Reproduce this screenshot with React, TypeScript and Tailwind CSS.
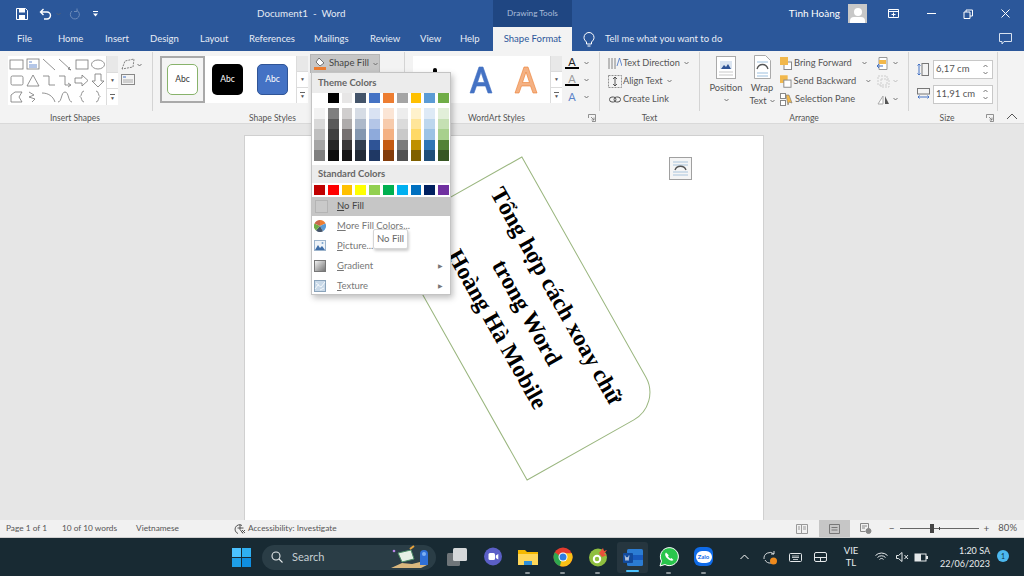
import React from "react"

const tabs = [
  ["File", "w-[46px] pl-[17px]"],
  ["Home", "w-[59px] pl-[12px]"],
  ["Insert", "w-[45px]"],
  ["Design", "w-[50px]"],
  ["Layout", "w-[49px]"],
  ["References", "w-[65px]"],
  ["Mailings", "w-[56px]"],
  ["Review", "w-[50px]"],
  ["View", "w-[40px]"],
  ["Help", "w-[33px]"],
]

const themeTop = ["bg-[#ffffff]", "bg-[#000000]", "bg-[#e7e6e6]", "bg-[#44546a]", "bg-[#4472c4]", "bg-[#ed7d31]", "bg-[#a5a5a5]", "bg-[#ffc000]", "bg-[#5b9bd5]", "bg-[#70ad47]"]
const themeShades = [
  ["bg-[#f2f2f2]", "bg-[#d9d9d9]", "bg-[#bfbfbf]", "bg-[#a6a6a6]", "bg-[#7f7f7f]"],
  ["bg-[#7f7f7f]", "bg-[#595959]", "bg-[#404040]", "bg-[#262626]", "bg-[#0d0d0d]"],
  ["bg-[#d0cece]", "bg-[#aeabab]", "bg-[#757070]", "bg-[#3a3838]", "bg-[#171616]"],
  ["bg-[#d6dce5]", "bg-[#adb9ca]", "bg-[#8497b0]", "bg-[#333f50]", "bg-[#222a35]"],
  ["bg-[#d9e2f3]", "bg-[#b4c6e7]", "bg-[#8eaadb]", "bg-[#2f5496]", "bg-[#1f3864]"],
  ["bg-[#fbe5d5]", "bg-[#f7cbac]", "bg-[#f4b183]", "bg-[#c55a11]", "bg-[#833c0b]"],
  ["bg-[#ededed]", "bg-[#dbdbdb]", "bg-[#c9c9c9]", "bg-[#7b7b7b]", "bg-[#525252]"],
  ["bg-[#fff2cc]", "bg-[#ffe599]", "bg-[#ffd966]", "bg-[#bf9000]", "bg-[#7f6000]"],
  ["bg-[#deeaf6]", "bg-[#bdd7ee]", "bg-[#9cc3e5]", "bg-[#2e75b5]", "bg-[#1f4e79]"],
  ["bg-[#e2efd9]", "bg-[#c5e0b3]", "bg-[#a8d08d]", "bg-[#538135]", "bg-[#375623]"],
]
const standard = ["bg-[#c00000]", "bg-[#ff0000]", "bg-[#ffc000]", "bg-[#ffff00]", "bg-[#92d050]", "bg-[#00b050]", "bg-[#00b0f0]", "bg-[#0070c0]", "bg-[#002060]", "bg-[#7030a0]"]

// the 18 little shapes of the Insert Shapes gallery
const shapeCells = [
  <rect x="1" y="3" width="13" height="9" />,
  <g><rect x="2" y="2" width="12" height="10" /><path d="M4 5h3M4 8h8M4 10h8" stroke="#4472c4" /></g>,
  <path d="M2 2l12 11" />,
  <path d="M2 2l12 11M14 13l-3-1 2-2" />,
  <rect x="2" y="3" width="12" height="9" />,
  <ellipse cx="8" cy="7.500" rx="6.500" ry="4.500" />,
  <rect x="2" y="3" width="12" height="9" rx="1.500" />,
  <path d="M8 2l6 11H2z" />,
  <path d="M2 3h6v9h6" />,
  <path d="M2 3h6v9h5M11 10l3 2-3 2" />,
  <path d="M1 5h7V2l6 5.500-6 5.500V10H1z" />,
  <path d="M5 1h6v7h3l-6 6-6-6h3z" />,
  <path d="M2 13V6l4-3h7l-3 5 3 5z" />,
  <path d="M4 3l5 3-5 2 6 2-3 3" />,
  <path d="M1 4c6 0 11 3 13 9" />,
  <path d="M1 13c4 0 3-10 7-10s3 10 7 10" />,
  <path d="M10 2C7 2 8 7 6 7.500 8 8 7 13 10 13" />,
  <path d="M6 2c3 0 2 5 4 5.500C8 8 9 13 6 13" />,
]

function Down({ className = "" }: { className?: string }) {
  return (
    <svg width="5" height="4" viewBox="0 0 5 4" className={className}>
      <path d="M.5 1l2 2 2-2" fill="none" stroke="#666" strokeWidth=".9" />
    </svg>
  )
}

function ScrollCol({ h = "h-[49px]" }: { h?: string }) {
  return (
    <div className={`w-[12px] ${h} flex flex-col border-l border-[#dcdcdc] bg-white shrink-0`}>
      <div className="flex-1 flex items-center justify-center border-b border-[#dcdcdc] bg-[#e8e8e8]" />
      <div className="flex-1 flex items-center justify-center border-b border-[#dcdcdc] text-[5px] text-[#555]">▼</div>
      <div className="flex-1 flex flex-col items-center justify-center">
        <div className="w-[5px] h-px bg-[#666] mb-px" />
        <div className="text-[5px] leading-[5px] text-[#555]">▼</div>
      </div>
    </div>
  )
}

function GroupLabel({ children, launcher, className = "" }: { children: React.ReactNode; launcher?: boolean; className?: string }) {
  return (
    <div className={`absolute left-0 right-0 top-[59px] h-[14px] flex items-center justify-center text-[8.500px] text-[#555] ${className}`}>
      {children}
      {launcher && (
        <svg width="8" height="8" viewBox="0 0 8 8" className="absolute right-[3px] top-[3px]">
          <path d="M.5 4V.5H7.500V7.500H4M3 3l3 3M6 3.500V6H3.500" fill="none" stroke="#777" strokeWidth=".8" />
        </svg>
      )}
    </div>
  )
}

function AbcTile({ className }: { className: string }) {
  return (
    <div className={`w-[31px] h-[31px] rounded-[5px] flex items-center justify-center text-[8.500px] ${className}`}>Abc</div>
  )
}

function BigA({ className, stroke }: { className: string; stroke: string }) {
  return (
    <svg width="26" height="30" viewBox="0 0 26 30" className={className}>
      <path d="M11 2h4l9 26h-4l-2.500-7H8.500L6 28H2zM13 7l-3.500 10.500h7z" stroke={stroke} strokeWidth=".6" fillRule="evenodd" />
    </svg>
  )
}

function MenuItem({ first, rest, icon, arrow }: { first: string; rest: string; icon: React.ReactNode; arrow?: boolean }) {
  return (
    <div className="h-[20px] flex items-center text-[9.500px] text-[#777]">
      <div className="w-[25px] pl-[2px] flex justify-start shrink-0">{icon}</div>
      <span className="pt-[2px]"><span className="underline">{first}</span>{rest}</span>
      {arrow && <span className="ml-auto mr-[7px] text-[6px] text-[#777]">▶</span>}
    </div>
  )
}

function FillMenu() {
  return (
    <div className="absolute left-[311px] top-[72px] w-[140px] h-[223px] bg-white border border-[#c4c4c4] shadow-[2px_3px_6px_rgba(0,0,0,.25)] z-20">
      <div className="h-[20px] bg-[#ececec] pl-[6px] flex items-center font-bold text-[9.500px] text-[#666]">Theme Colors</div>
      <div className="pl-[2px]">
        <div className="flex gap-[3px]">
          {themeTop.map((c, i) => (
            <div key={i} className={`w-[10.800px] h-[10px] ${c}`} />
          ))}
        </div>
        <div className="flex gap-[3px] mt-[5px]">
          {themeShades.map((col, i) => (
            <div key={i} className="w-[10.800px] flex flex-col">
              {col.map((c, j) => (
                <div key={j} className={`h-[10.500px] ${c}`} />
              ))}
            </div>
          ))}
        </div>
      </div>
      <div className="h-[18px] mt-[4px] pt-[1px] bg-[#ececec] pl-[6px] flex items-center font-bold text-[9.500px] text-[#666]">Standard Colors</div>
      <div className="pl-[2px] mt-[2px] flex gap-[3px]">
        {standard.map((c, i) => (
          <div key={i} className={`w-[10.800px] h-[10px] ${c}`} />
        ))}
      </div>
      <div className="h-[19px] mt-[2px] bg-[#c6c6c6] flex items-center text-[9.500px] text-[#444]">
        <div className="w-[13px] h-[13px] ml-[3px] mr-[9px] border border-[#b4b4b4] bg-[#c9c9c9]" />
        <span className="pt-[1px]"><span className="underline">N</span>o Fill</span>
      </div>
      <div>
        <MenuItem
          first="M"
          rest="ore Fill Colors..."
          icon={
            <svg width="12" height="12" viewBox="0 0 12 12">
              <path d="M6 6V0a6 6 0 0 1 5.500 3.500z" fill="#ed7d31" />
              <path d="M6 6l5.500-2.500A6 6 0 0 1 9 11.200z" fill="#5b9bd5" />
              <path d="M6 6l3 5.200A6 6 0 0 1 2 10.500z" fill="#44546a" />
              <path d="M6 6l-4 4.500A6 6 0 0 1 .5 3.500z" fill="#70ad47" />
              <path d="M6 6L.5 3.500A6 6 0 0 1 6 0z" fill="#c9684a" />
            </svg>
          }
        />
        <MenuItem
          first="P"
          rest="icture..."
          icon={
            <svg width="12" height="11" viewBox="0 0 12 11">
              <rect x=".5" y=".5" width="11" height="10" fill="#eef3f8" stroke="#9db4cc" />
              <path d="M1 10l3-5 2 3 2-2 3 4z" fill="#3f6ea8" />
              <circle cx="8.500" cy="3" r="1" fill="#7aa4cf" />
            </svg>
          }
        />
        <MenuItem
          first="G"
          rest="radient"
          arrow
          icon={<div className="w-[12px] h-[12px] border border-[#777] bg-gradient-to-br from-[#f2f2f2] to-[#777]" />}
        />
        <MenuItem
          first="T"
          rest="exture"
          arrow
          icon={
            <svg width="12" height="12" viewBox="0 0 12 12">
              <rect x=".5" y=".5" width="11" height="11" fill="#c9d9e8" stroke="#8aa3ba" />
              <path d="M1 9l3-4 3 2 4-5M2 3l3 2M6 10l4-2" fill="none" stroke="#f4f8fb" />
            </svg>
          }
        />
      </div>
      <div className="absolute left-[61px] top-[156px] h-[20px] px-[3px] flex items-center bg-white border border-[#d6d6d6] rounded-[2px] shadow-[1px_2px_3px_rgba(0,0,0,.2)] text-[9.500px] text-[#666]">
        No Fill
      </div>
    </div>
  )
}

function TitleBar() {
  return (
    <div className="h-[27px] flex items-center text-white shrink-0">
      <div className="w-[493px] flex items-center relative">
        <svg width="12" height="12" viewBox="0 0 12 12" className="ml-[16px]">
          <path d="M.5.5h9l2 2v9H.5z" fill="none" stroke="#fff" />
          <rect x="3" y="1" width="6" height="3.500" fill="#fff" />
          <rect x="3" y="7" width="6" height="4" fill="#fff" />
        </svg>
        <svg width="14" height="12" viewBox="0 0 14 12" className="ml-[11px]">
          <path d="M4.500 1L1.500 4l3 3M2 4h6a3.500 3.500 0 0 1 0 7H5" fill="none" stroke="#fff" strokeWidth="1.400" />
        </svg>
        <Down className="ml-[3px] opacity-70" />
        <svg width="12" height="12" viewBox="0 0 12 12" className="ml-[8px] opacity-30">
          <path d="M8 2.500A4.500 4.500 0 1 1 3 3M8 .5v3H5" fill="none" stroke="#fff" />
        </svg>
        <svg width="5" height="6" viewBox="0 0 5 6" className="ml-[12px]">
          <path d="M0 0h5v1H0zM0 2.500h5L2.500 5.500z" fill="#fff" />
        </svg>
        <span className="absolute left-[257px] text-[9.800px] text-[#e4eaf4]">Document1&nbsp; -&nbsp; Word</span>
      </div>
      <div className="w-[79px] h-full bg-[#1f4682] flex items-center justify-center text-[8.200px] text-[#a9bcd9]">Drawing Tools</div>
      <div className="flex-1 flex items-center justify-end">
        <span className="text-[10px] mr-[8px]">Tình Hoàng</span>
        <div className="w-[19px] h-[19px] bg-[#c8c8c8] flex flex-col items-center justify-end overflow-hidden mr-[21px]">
          <div className="w-[8px] h-[8px] rounded-full bg-white mb-[1px]" />
          <div className="w-[15px] h-[6px] rounded-t-[4px] bg-white" />
        </div>
        <svg width="12" height="10" viewBox="0 0 12 10" className="mr-[27px]">
          <path d="M.5.5h10v8H.5zM.5 2.500h10M5.500 3.500v4M3.500 5.500h4" fill="none" stroke="#fff" />
        </svg>
        <div className="w-[9px] h-px bg-white mr-[27px]" />
        <svg width="10" height="10" viewBox="0 0 10 10" className="mr-[28px]">
          <path d="M1 3h6v6.500H1zM3 3V1h6.500v6H7" fill="none" stroke="#fff" />
        </svg>
        <svg width="9" height="9" viewBox="0 0 9 9" className="mr-[14px]">
          <path d="M.5.5l8 8M8.500.5l-8 8" stroke="#fff" />
        </svg>
      </div>
    </div>
  )
}

function TabBar() {
  return (
    <div className="h-[24px] flex items-center text-[9.500px] text-[#e8edf6] shrink-0">
      {tabs.map(([t, w]) => (
        <div key={t} className={`${w} pt-[1px]`}>{t}</div>
      ))}
      <div className="w-[79px] h-full pt-[1px] bg-[#f3f3f3] text-[#2b579a] flex items-center justify-center">Shape Format</div>
      <svg width="12" height="15" viewBox="0 0 12 15" className="ml-[11px]">
        <path d="M3.500 10C2 8.500 1 7.500 1 5.500a5 5 0 0 1 10 0c0 2-1 3-2.500 4.500v2h-5zM4.500 14h3" fill="none" stroke="#fff" />
      </svg>
      <span className="ml-[10px] pt-[1px]">Tell me what you want to do</span>
      <svg width="13" height="12" viewBox="0 0 13 12" className="ml-auto mr-[12px]">
        <path d="M.5.5h12v8H5L3 11V8.500H.5z" fill="none" stroke="#d8e2f0" />
      </svg>
    </div>
  )
}

function InsertShapes() {
  return (
    <div className="relative w-[153px] h-full border-r border-[#d4d4d4] shrink-0 pt-[4px] pl-[8px] flex">
      <div className="w-[110px] h-[49px] bg-white flex">
        <div className="w-[98px] grid grid-cols-6 pt-[1px] pl-[1px]">
          {shapeCells.map((s, i) => (
            <svg key={i} width="16" height="16" viewBox="0 0 16 16" fill="none" stroke="#777" strokeWidth=".8">
              {s}
            </svg>
          ))}
        </div>
        <ScrollCol />
      </div>
      <div className="ml-[3px] flex flex-col gap-[3px] pt-[2px]">
        <div className="flex items-center gap-[1px]">
          <svg width="15" height="13" viewBox="0 0 15 13" fill="none" stroke="#666" strokeWidth=".8" strokeDasharray="2 1">
            <path d="M1 11L4 3l9-2-1 8z" />
          </svg>
          <Down />
        </div>
        <svg width="14" height="12" viewBox="0 0 14 12" fill="none">
          <rect x=".5" y=".5" width="13" height="10" stroke="#888" />
          <path d="M2 3h3" stroke="#4472c4" />
          <path d="M2 6h10M2 8h10" stroke="#aaa" />
        </svg>
      </div>
      <GroupLabel className="pr-[2px]">Insert Shapes</GroupLabel>
    </div>
  )
}

function ShapeStyles() {
  return (
    <div className="relative w-[252px] h-full border-r border-[#d4d4d4] shrink-0 pt-[4px] pl-[7px] flex">
      <div className="w-[148px] h-[47px] bg-white flex">
        <div className="w-[136px] flex items-center">
          <div className="w-[45px] h-[47px] border-[2px] border-[#a9a9a9] bg-[#f4f4f4] flex items-center justify-center shrink-0">
            <AbcTile className="bg-white border-[1.500px] border-[#88b36b] text-[#333]" />
          </div>
          <AbcTile className="bg-black text-white ml-[7px]" />
          <AbcTile className="bg-[#4472c4] border border-[#2f5496] text-white ml-[14px]" />
        </div>
        <ScrollCol h="h-[47px]" />
      </div>
      <div className="ml-[2px] -mt-[2px] w-[70px] h-[19px] bg-[#c6c6c6] border border-[#b5b5b5] flex items-center text-[9.500px] whitespace-nowrap text-[#444] shrink-0">
        <svg width="14" height="13" viewBox="0 0 14 13" className="ml-[2px] mr-[2px]">
          <path d="M6 1l5 5-4 3-4-4z" fill="#fff" stroke="#555" strokeWidth=".8" />
          <rect x="1" y="10" width="12" height="3" fill="#ed7d31" />
        </svg>
        Shape Fill
        <Down className="ml-[4px]" />
      </div>
      <GroupLabel className="pr-[12px]">Shape Styles</GroupLabel>
    </div>
  )
}

function WordArt() {
  return (
    <div className="relative w-[195px] h-full border-r border-[#d4d4d4] shrink-0 pt-[4px] pl-[8px] flex">
      <div className="w-[149px] h-[47px] bg-white flex overflow-hidden">
        <div className="w-[137px] flex items-center relative">
          <BigA className="ml-[55px] fill-[#4472c4]" stroke="#4472c4" />
          <BigA className="ml-[19px] fill-[#f4b183]" stroke="#ed7d31" />
          <div className="absolute left-[20px] top-[12px] w-[4px] h-[8px] rounded-full bg-black" />
        </div>
        <ScrollCol h="h-[47px]" />
      </div>
      <div className="ml-[3px] flex flex-col gap-[5px] pt-[1px]">
        <div className="flex items-center gap-[5px]">
          <div className="w-[14px] flex flex-col items-center leading-none">
            <span className="text-[11px] leading-[10px] text-[#222]">A</span>
            <div className="w-[14px] h-[2px] bg-black" />
          </div>
          <Down />
        </div>
        <div className="flex items-center gap-[5px]">
          <div className="w-[14px] flex flex-col items-center leading-none">
            <span className="text-[11px] leading-[10px] text-[#999]">A</span>
            <div className="w-[14px] h-[2px] bg-black" />
          </div>
          <Down />
        </div>
        <div className="flex items-center gap-[5px]">
          <span className="w-[14px] text-center text-[11px] leading-[12px] text-[#5b83c9]">A</span>
          <Down />
        </div>
      </div>
      <GroupLabel launcher className="pr-[11px]">WordArt Styles</GroupLabel>
    </div>
  )
}

function TextGroup() {
  return (
    <div className="relative w-[100px] h-full border-r border-[#d4d4d4] shrink-0 pl-[8px] pt-[2px] text-[9.200px] text-[#555] flex flex-col">
      <div className="h-[18px] flex items-center gap-[1px]">
        <svg width="14" height="13" viewBox="0 0 14 13" fill="none" stroke="#666" strokeWidth=".8">
          <path d="M1 1v11M4 1v11M7 1v11" />
          <path d="M9 9l2.500-8L14 9" stroke="#4472c4" />
        </svg>
        Text Direction
        <Down className="ml-[3px]" />
      </div>
      <div className="h-[18px] flex items-center gap-[1px]">
        <svg width="14" height="13" viewBox="0 0 14 13" fill="none" stroke="#777" strokeWidth=".8" strokeDasharray="2 1">
          <rect x=".5" y=".5" width="13" height="12" />
          <path d="M7 2v9M5 4l2-2 2 2M5 9l2 2 2-2" stroke="#333" strokeDasharray="none" />
        </svg>
        Align Text
        <Down className="ml-[3px]" />
      </div>
      <div className="h-[18px] flex items-center gap-[2px] pl-[1px]">
        <svg width="12" height="7" viewBox="0 0 12 7" fill="none" stroke="#555">
          <rect x=".5" y="1" width="6.500" height="5" rx="2.500" />
          <rect x="5" y="1" width="6.500" height="5" rx="2.500" />
        </svg>
        Create Link
      </div>
      <GroupLabel>Text</GroupLabel>
    </div>
  )
}

function ArrangeRow({ label, icon, arrow }: { label: string; icon: React.ReactNode; arrow?: boolean }) {
  return (
    <div className="h-[18px] flex items-center gap-[2px] whitespace-nowrap">
      {icon}
      {label}
      {arrow && <Down className="ml-[8px]" />}
    </div>
  )
}

function Arrange() {
  const forward = (
    <svg width="12" height="13" viewBox="0 0 12 13">
      <rect x="4" y="5" width="7.500" height="7.500" fill="#fff" stroke="#888" />
      <rect x="0" y="0" width="8" height="8" fill="#f2b84b" />
    </svg>
  )
  const backward = (
    <svg width="12" height="13" viewBox="0 0 12 13">
      <rect x="0" y="0" width="8" height="8" fill="#f2b84b" />
      <rect x="4" y="5" width="7.500" height="7.500" fill="#fff" stroke="#888" />
    </svg>
  )
  return (
    <div className="relative w-[209px] h-full border-r border-[#d4d4d4] shrink-0 flex text-[9.300px] text-[#555]">
      <div className="w-[45px] pl-[7px] pt-[4px] flex flex-col items-center">
        <svg width="20" height="23" viewBox="0 0 20 23">
          <rect x=".5" y=".5" width="19" height="22" fill="#fff" stroke="#aaa" />
          <rect x="4" y="5" width="12" height="8" fill="#dbe5f1" />
          <path d="M5 13l3-4 2 2 2-3 3 5z" fill="#2f5496" />
          <path d="M3 16h14M3 19h14" stroke="#c9c9c9" />
        </svg>
        <span className="mt-[2px] leading-[13px]">Position</span>
        <Down className="mt-[4px]" />
      </div>
      <div className="w-[34px] pt-[3px] flex flex-col items-center">
        <svg width="17" height="24" viewBox="0 0 17 24">
          <path d="M.5.5h11l5 5v18H.5z" fill="#fff" stroke="#aaa" />
          <path d="M3 7h11M3 18h11M3 21h11" stroke="#9dc0de" />
          <path d="M3 14c2-6 9-6 11 0" fill="none" stroke="#555" strokeWidth="1.300" />
        </svg>
        <span className="leading-[13px] mt-[2px]">Wrap</span>
        <span className="leading-[13px] whitespace-nowrap flex items-center gap-[3px]">Text <Down /></span>
      </div>
      <div className="w-[92px] pl-[1px] pt-[2px] flex flex-col">
        <ArrangeRow label="Bring Forward" icon={forward} arrow />
        <ArrangeRow label="Send Backward" icon={backward} arrow />
        <ArrangeRow
          label="Selection Pane"
          icon={
            <svg width="13" height="13" viewBox="0 0 13 13">
              <rect x=".5" y=".5" width="5" height="5" fill="#fff" stroke="#888" />
              <rect x=".5" y="7.500" width="5" height="5" fill="#fff" stroke="#888" />
              <path d="M6 2h3l3 8-3-1-1 3z" fill="#f2b84b" stroke="#777" strokeWidth=".6" />
            </svg>
          }
        />
      </div>
      <div className="pl-[6px] pt-[2px] flex flex-col">
        <div className="h-[18px] flex items-center gap-[3px]">
          <svg width="13" height="13" viewBox="0 0 13 13">
            <path d="M2 .5h8v12H2z" fill="#fff" stroke="#999" />
            <rect x="2" y="3" width="7" height="4" fill="#f2b84b" />
            <path d="M0 9h6M2 7l-2 2 2 2" fill="none" stroke="#4472c4" />
          </svg>
          <Down />
        </div>
        <div className="h-[18px] flex items-center gap-[3px] opacity-40">
          <svg width="13" height="13" viewBox="0 0 13 13" fill="none" stroke="#999" strokeDasharray="2 1">
            <rect x="1" y="1" width="9" height="9" />
            <rect x="4" y="4" width="8" height="8" />
          </svg>
          <Down />
        </div>
        <div className="h-[18px] flex items-center gap-[3px]">
          <svg width="13" height="11" viewBox="0 0 13 11">
            <path d="M1 10l5-8v8z" fill="#fff" stroke="#aaa" />
            <path d="M8 2l4 8H8z" fill="#555" />
          </svg>
          <Down />
        </div>
      </div>
      <GroupLabel>Arrange</GroupLabel>
    </div>
  )
}

function SizeInput({ value, icon }: { value: string; icon: React.ReactNode }) {
  return (
    <div className="h-[20px] flex items-center">
      <div className="w-[16px] flex justify-center">{icon}</div>
      <div className="ml-[2px] w-[60px] h-[19px] bg-white border border-[#c8c8c8] flex items-center pl-[2px] text-[9.500px] text-[#555]">
        {value}
        <div className="ml-auto mr-[4px] flex flex-col gap-[3px] items-center">
          <Down className="rotate-180" />
          <Down />
        </div>
      </div>
    </div>
  )
}

function SizeGroup() {
  return (
    <div className="relative w-[89px] h-full border-r border-[#d4d4d4] shrink-0 pl-[6px] pt-[7px] flex flex-col gap-[5px]">
      <SizeInput
        value="6,17 cm"
        icon={
          <svg width="12" height="13" viewBox="0 0 12 13" fill="none">
            <rect x="5" y=".5" width="6.500" height="12" stroke="#777" />
            <path d="M2 1v11M.5 2.500L2 1l1.500 1.500M.5 10.500L2 12l1.500-1.500" stroke="#4472c4" />
          </svg>
        }
      />
      <SizeInput
        value="11,91 cm"
        icon={
          <svg width="13" height="12" viewBox="0 0 13 12" fill="none">
            <rect x=".5" y=".5" width="12" height="5.500" stroke="#777" />
            <path d="M1 9h11M2.500 7.500L1 9l1.500 1.500M10.500 7.500L12 9l-1.500 1.500" stroke="#4472c4" />
          </svg>
        }
      />
      <GroupLabel launcher className="pr-[12px]">Size</GroupLabel>
    </div>
  )
}

function Ribbon() {
  return (
    <div className="h-[73px] bg-[#f3f3f3] border-b border-[#d9d9d9] flex shrink-0 pt-[1px] pb-[12px]">
      <InsertShapes />
      <ShapeStyles />
      <WordArt />
      <TextGroup />
      <Arrange />
      <SizeGroup />
      <svg width="12" height="7" viewBox="0 0 12 7" className="mt-[61px] ml-[8px]">
        <path d="M1 6l5-5 5 5" fill="none" stroke="#555" />
      </svg>
    </div>
  )
}

function Page() {
  return (
    <div className="relative w-[520px] h-[385px] mt-[11px] bg-white border-x border-t border-[#d0d0d0]">
      {/* rotated text box, placed freely on the page */}
      <div className="absolute left-[137px] top-[105px] w-[285px] h-[155px] rotate-[60.600deg] border border-[#9ab67f] rounded-tr-[32px] flex flex-col items-center justify-center pb-[12px] pr-[8px] font-['Liberation_Serif',serif] font-bold text-[23.500px] leading-[34px] text-black whitespace-nowrap">
        <div>Tổng hợp cách xoay chữ</div>
        <div>trong Word</div>
        <div>Hoàng Hà Mobile</div>
      </div>
      <div className="absolute left-[424px] top-[21px] w-[23px] h-[23px] bg-[#f5f5f5] border border-[#a0a0a0] flex items-center justify-center">
        <svg width="17" height="15" viewBox="0 0 17 15" fill="none">
          <path d="M1 1h15M1 4h15M1 11h15M1 14h15" stroke="#a9c4dc" />
          <path d="M3 9c2-5 9-5 11 0" stroke="#555" strokeWidth="1.400" />
        </svg>
      </div>
    </div>
  )
}

function StatusBar() {
  return (
    <div className="h-[18px] bg-[#f1f1f1] border-b border-[#cfcfcf] flex items-center text-[8.300px] text-[#555] shrink-0">
      <span className="ml-[6px]">Page 1 of 1</span>
      <span className="ml-[15px]">10 of 10 words</span>
      <span className="ml-[19px]">Vietnamese</span>
      <svg width="12" height="12" viewBox="0 0 12 12" className="ml-[55px]" fill="none" stroke="#444" strokeWidth=".9">
        <path d="M8 2.500A4.500 4.500 0 1 0 4 10.500M6 1.500v5l3 4M3.500 5h6M8 7l3 3M11 7l-3 3" />
      </svg>
      <span className="ml-[2px]">Accessibility: Investigate</span>
      <svg width="12" height="10" viewBox="0 0 12 10" fill="none" stroke="#999" className="ml-auto">
        <path d="M.5.5h5v9h-5zM5.500.5h6v9h-6zM2 3h2M2 5h2M7 3h3M7 5h3" />
      </svg>
      <div className="w-[31px] h-full bg-[#c6c6c6] ml-[11px] flex items-center justify-center">
        <svg width="11" height="10" viewBox="0 0 11 10" fill="none" stroke="#777">
          <path d="M.5.5h10v9H.5zM2.500 3.500h6M2.500 6h6" />
        </svg>
      </div>
      <svg width="12" height="11" viewBox="0 0 12 11" fill="none" stroke="#888" className="ml-[10px]">
        <path d="M.5.5h8v6M.5.500v8h5M2 3h5M2 5h3" />
        <circle cx="8.500" cy="8" r="2.500" fill="#888" />
      </svg>
      <span className="ml-[17px] text-[10px]">−</span>
      <div className="relative w-[79px] h-px bg-[#666] ml-[5px]">
        <div className="absolute left-[30px] -top-[4px] w-[4px] h-[9px] bg-[#444]" />
        <div className="absolute left-[39px] -top-[1px] w-px h-[3px] bg-[#444]" />
      </div>
      <span className="ml-[5px] text-[10px]">+</span>
      <span className="ml-[9px] mr-[7px] text-[9.500px]">80%</span>
    </div>
  )
}

function TaskIcon({ className = "", dot, children }: { className?: string; dot?: boolean; children: React.ReactNode }) {
  return (
    <div className={`relative w-[20px] h-[20px] shrink-0 ${className}`}>
      {children}
      {dot && <div className="absolute left-[7px] -bottom-[7px] w-[5px] h-[2px] rounded-full bg-[#8a9499]" />}
    </div>
  )
}

function Taskbar() {
  return (
    <div className="h-[38px] shrink-0 bg-[#182a33] flex items-center text-white">
      <svg width="19" height="19" viewBox="0 0 19 19" className="ml-[232px]">
        <rect width="9" height="9" fill="#4cc2ff" />
        <rect x="10" width="9" height="9" fill="#2fb0f2" />
        <rect y="10" width="9" height="9" fill="#1e9fe8" />
        <rect x="10" y="10" width="9" height="9" fill="#0f8ee0" />
      </svg>
      <div className="relative ml-[11px] w-[174px] h-[25px] rounded-full bg-[#2a3d46] flex items-center text-[11px] text-[#c6ced2]">
        <svg width="12" height="12" viewBox="0 0 12 12" className="ml-[9px] mr-[9px]" fill="none" stroke="#e4e8ea" strokeWidth="1.100">
          <circle cx="5" cy="5" r="4" />
          <path d="M8 8l3.500 3.500" />
        </svg>
        Search
        <svg width="44" height="24" viewBox="0 0 44 24" className="absolute right-[2px] top-0">
          <path d="M1 23l11-5 10 1 12-3 3 4-6 3z" fill="#d9b77e" />
          <path d="M8 8l13-3 3 9-12 3z" fill="#e6f0e4" stroke="#4c8c66" />
          <path d="M20 4l4-3" stroke="#e8a33d" strokeWidth="2" />
          <path d="M30 20V9a4 4 0 0 1 8 0v11z" fill="#2f6fd6" />
          <circle cx="34" cy="9" r="2" fill="#7eb0f2" />
          <circle cx="4" cy="6" r="1.300" fill="#b886e8" />
        </svg>
      </div>
      <svg width="20" height="18" viewBox="0 0 20 18" className="ml-[11px]">
        <rect y="5" width="13" height="13" rx="1.500" fill="#6f7579" />
        <rect x="6" width="14" height="13" rx="1.500" fill="#d5d8da" />
      </svg>
      <TaskIcon className="ml-[16px]">
        <svg width="20" height="20" viewBox="0 0 20 20">
          <circle cx="10" cy="9.500" r="9" fill="#5b5fc7" />
          <rect x="5.500" y="6" width="6.500" height="7" rx="1.500" fill="#fff" />
          <path d="M12.800 8.500l2.500-1.500v5.500l-2.500-1.500z" fill="#fff" />
        </svg>
      </TaskIcon>
      <TaskIcon className="ml-[15px]" dot>
        <svg width="20" height="20" viewBox="0 0 20 20">
          <path d="M0 3h7l2 2h11v13H0z" fill="#f5b800" />
          <path d="M0 7h20v11H0z" fill="#ffd75a" />
          <rect x="6" y="14" width="8" height="4" fill="#2f8fd9" />
        </svg>
      </TaskIcon>
      <TaskIcon className="ml-[15px]" dot>
        <svg width="20" height="20" viewBox="0 0 20 20">
          <circle cx="10" cy="10" r="9.500" fill="#e33b2e" />
          <path d="M1.800 5.300A9.500 9.500 0 0 0 7 19l4-7z" fill="#2fa84f" />
          <path d="M18.800 6.300H10L7 19a9.500 9.500 0 0 0 11.800-12.700z" fill="#fbc116" />
          <circle cx="10" cy="10" r="4.500" fill="#fff" />
          <circle cx="10" cy="10" r="3.500" fill="#2f7de1" />
        </svg>
      </TaskIcon>
      <TaskIcon className="ml-[15px]" dot>
        <svg width="20" height="20" viewBox="0 0 20 20">
          <circle cx="10" cy="10.500" r="9" fill="#8fbf3f" />
          <circle cx="9" cy="12" r="3.200" fill="none" stroke="#fff" strokeWidth="2" />
          <path d="M11 6l4-5 1 3 3-1-3 4 3 1-5 2z" fill="#e9503a" />
        </svg>
      </TaskIcon>
      <div className="relative ml-[9px] w-[31px] h-[31px] rounded-[3px] bg-[#26363f] flex items-center justify-center shrink-0">
        <svg width="20" height="17" viewBox="0 0 20 17">
          <rect x="4" width="16" height="17" rx="1.500" fill="#2b7cd3" />
          <rect x="4" y="6" width="16" height="5" fill="#185abd" />
          <rect x="0" y="4" width="10" height="10" rx="1" fill="#124a9c" />
          <path d="M2 6.500l1 5 1-3.500 1 3.500 1-5" fill="none" stroke="#fff" strokeWidth=".7" />
        </svg>
        <div className="absolute left-[9px] bottom-[1px] w-[13px] h-[2px] rounded-full bg-[#4cc2ff]" />
      </div>
      <TaskIcon className="ml-[11px]" dot>
        <svg width="20" height="20" viewBox="0 0 20 20">
          <path d="M1 19l1.500-5A9 9 0 1 1 6 17.500z" fill="#29c54c" stroke="#fff" strokeWidth="1" />
          <path d="M7 5.500c-2 2 0 5 2 6.500s4 2.500 5.500 1l-2-2-1 .8c-1-.5-2-1.500-2.500-2.500l.8-1z" fill="#fff" />
        </svg>
      </TaskIcon>
      <TaskIcon className="ml-[15px]" dot>
        <div className="w-[19px] h-[19px] rounded-[6px] bg-[#0f6be8] flex items-center justify-center">
          <div className="w-[16px] h-[12px] rounded-full bg-white text-[6px] leading-[12px] text-center text-[#0f6be8] font-bold">Zalo</div>
        </div>
      </TaskIcon>
      <svg width="9" height="6" viewBox="0 0 9 6" className="ml-[26px]">
        <path d="M.5 5l4-4 4 4" fill="none" stroke="#fff" />
      </svg>
      <svg width="14" height="15" viewBox="0 0 14 15" className="ml-[14px]">
        <path d="M1 9a6 6 0 0 1 10-5M11 1v3H8M8 13a6 6 0 0 1-6-3" fill="none" stroke="#d5d8da" />
        <circle cx="10.500" cy="11" r="3.500" fill="#ee8a1d" />
      </svg>
      <svg width="13" height="9" viewBox="0 0 13 9" className="ml-[12px]" fill="none" stroke="#e4e8ea">
        <rect x=".5" y=".5" width="12" height="8" rx="1" />
        <path d="M3 3h7M3 4.500h7M4 6.500h5" strokeWidth=".8" />
      </svg>
      <svg width="13" height="10" viewBox="0 0 13 10" className="ml-[12px]" fill="none" stroke="#e4e8ea">
        <rect x=".5" y=".5" width="12" height="9" rx="1.500" />
        <path d="M.5 5.500h12M6.500 5.500v4" />
      </svg>
      <div className="ml-[11px] w-[26px] flex flex-col items-center text-[9.500px] leading-[12.500px] text-[#e8ecee]">
        <span>VIE</span>
        <span>TL</span>
      </div>
      <svg width="13" height="10" viewBox="0 0 13 10" className="ml-[11px]" fill="none" stroke="#e4e8ea">
        <path d="M.5 3.500a8.500 8.500 0 0 1 12 0M2.500 5.500a5.500 5.500 0 0 1 8 0M4.500 7.500a2.500 2.500 0 0 1 4 0" />
      </svg>
      <svg width="13" height="10" viewBox="0 0 13 10" className="ml-[8px]" fill="none" stroke="#e4e8ea">
        <path d="M.5 3.500h2L6 .5v9L2.500 6.500h-2zM8.500 3l3.500 4M12 3L8.500 7" />
      </svg>
      <svg width="14" height="10" viewBox="0 0 14 10" className="ml-[5px]">
        <rect x="1" y="2" width="11" height="7" fill="none" stroke="#e4e8ea" />
        <rect x="1" y="2" width="6" height="7" fill="#e4e8ea" />
        <rect x="12" y="4" width="2" height="3" fill="#e4e8ea" />
      </svg>
      <div className="ml-auto mr-[34px] flex flex-col items-end text-[9px] leading-[13px] text-[#e8ecee] relative">
        <span>1:20 SA</span>
        <span>22/06/2023</span>
        <div className="absolute -right-[19px] top-[6px] w-[12px] h-[12px] rounded-full bg-[#4cb8ef] text-[7px] leading-[12px] text-center text-[#10303f]">1</div>
      </div>
    </div>
  )
}

export default function App() {
  return (
    <div className="relative w-[1024px] h-[576px] overflow-hidden flex flex-col font-['Lato',sans-serif] bg-[#e6e6e6]">
      <div className="bg-[#2b579a] shrink-0">
        <TitleBar />
        <TabBar />
      </div>
      <Ribbon />
      <div className="flex-1 min-h-0 pr-[16px] flex justify-center overflow-hidden">
        <Page />
      </div>
      <StatusBar />
      <Taskbar />
      <FillMenu />
    </div>
  )
}
